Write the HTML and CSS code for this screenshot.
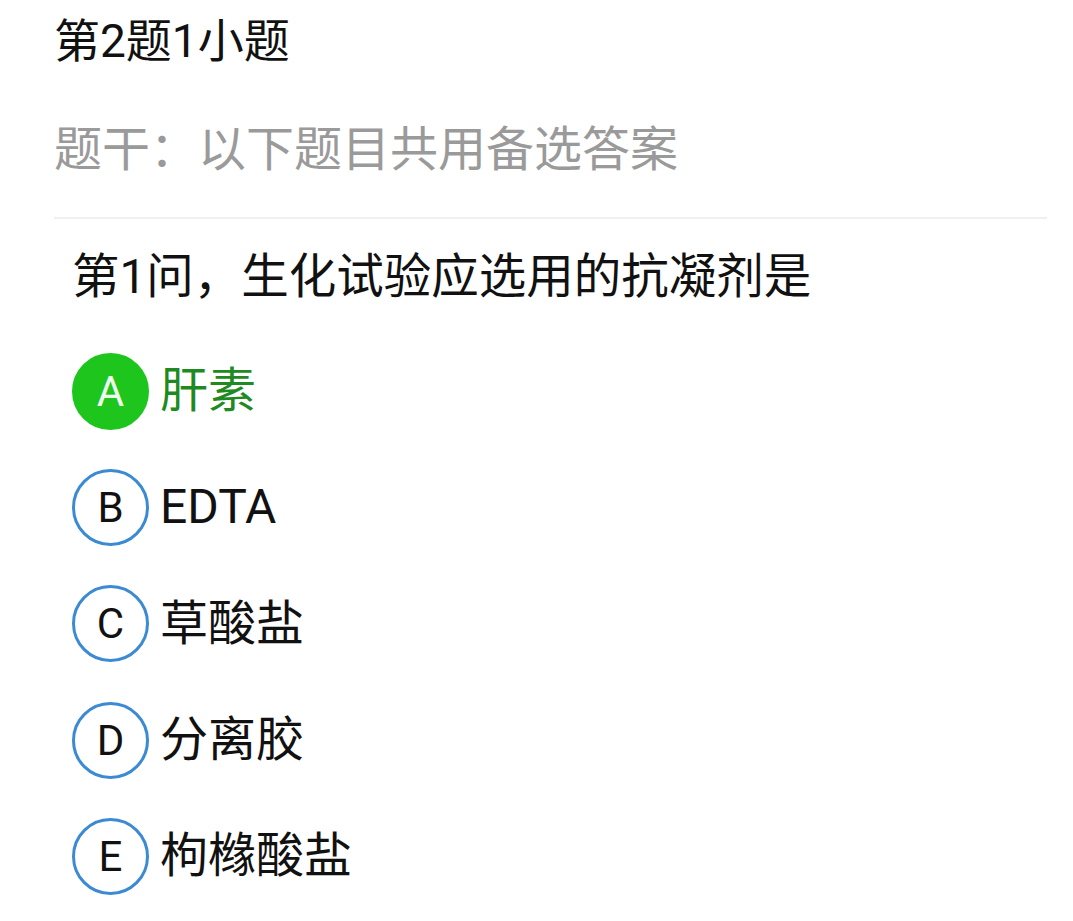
FILE: index.html
```html
<!DOCTYPE html>
<html lang="zh-CN">
<head>
<meta charset="utf-8">
<link rel="stylesheet" href="styles.css">
</head>
<body>
<div class="page">
  <div class="title">第2题1小题</div>
  <div class="stem">题干：以下题目共用备选答案</div>
  <div class="divider"></div>
  <div class="question">第1问，生化试验应选用的抗凝剂是</div>
  <div class="options">
    <div class="option correct"><span class="badge">A</span><span class="label">肝素</span></div>
    <div class="option"><span class="badge">B</span><span class="label">EDTA</span></div>
    <div class="option"><span class="badge">C</span><span class="label">草酸盐</span></div>
    <div class="option"><span class="badge">D</span><span class="label">分离胶</span></div>
    <div class="option"><span class="badge">E</span><span class="label">枸橼酸盐</span></div>
  </div>
</div>
</body>
</html>
```
FILE: styles.css
```css
html, body {
  margin: 0;
  padding: 0;
  background: #ffffff;
}
body {
  font-family: Roboto, "Noto Sans CJK SC", sans-serif;
  color: #111111;
}
.page {
  padding: 0 26px 0 54px;
}
.title {
  font-size: 46px;
  line-height: 82px;
  height: 82px;
  color: #111111;
}
.stem {
  margin-top: 27px;
  font-size: 48px;
  line-height: 82px;
  height: 82px;
  color: #9a9a9a;
}
.divider {
  margin-top: 26px;
  height: 2px;
  background: #f0f0f0;
}
.question {
  padding-top: 18px;
  padding-left: 18px;
  font-size: 47.5px;
  line-height: 80px;
  height: 80px;
}
.options {
  margin-top: 16px;
  padding-left: 18px;
  display: flex;
  flex-direction: column;
}
.option {
  height: 116.3px;
  display: flex;
  align-items: center;
  gap: 11px;
}
.badge {
  box-sizing: border-box;
  width: 77px;
  height: 77px;
  border-radius: 50%;
  border: 3px solid #3b8ad3;
  display: flex;
  align-items: center;
  justify-content: center;
  font-size: 42px;
  color: #111111;
  flex: none;
}
.label {
  font-size: 48px;
  line-height: 60px;
}
.option.correct .badge {
  background: #1dc51d;
  border-color: #1dc51d;
  color: #eefdee;
}
.option.correct .label {
  color: #1f8a22;
}
```
